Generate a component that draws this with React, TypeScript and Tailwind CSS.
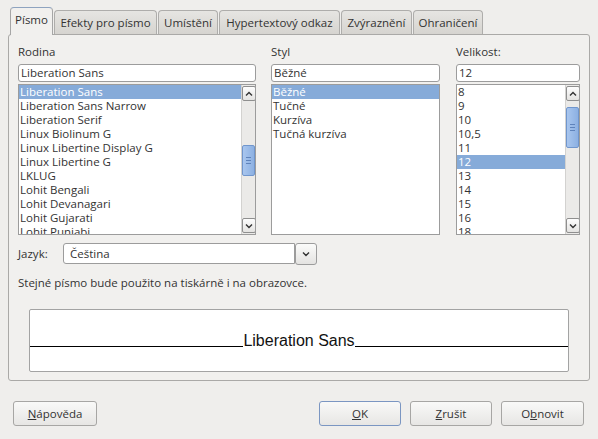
import React from 'react';

const families = [
  'Liberation Sans',
  'Liberation Sans Narrow',
  'Liberation Serif',
  'Linux Biolinum G',
  'Linux Libertine Display G',
  'Linux Libertine G',
  'LKLUG',
  'Lohit Bengali',
  'Lohit Devanagari',
  'Lohit Gujarati',
  'Lohit Punjabi',
];

const styles = ['Běžné', 'Tučné', 'Kurzíva', 'Tučná kurzíva'];

const sizes = ['8', '9', '10', '10,5', '11', '12', '13', '14', '15', '16', '18'];

const tabs = [
  { label: 'Písmo', w: 'w-[43px]' },
  { label: 'Efekty pro písmo', w: 'w-[103px]' },
  { label: 'Umístění', w: 'w-[60px]' },
  { label: 'Hypertextový odkaz', w: 'w-[121px]' },
  { label: 'Zvýraznění', w: 'w-[71px]' },
  { label: 'Ohraničení', w: 'w-[70px]' },
];

function Chevron({ up }: { up?: boolean }) {
  return (
    <svg width="8" height="6" viewBox="0 0 8 6">
      <path
        d={up ? 'M1 4.5 L4 1.5 L7 4.5' : 'M1 1.5 L4 4.5 L7 1.5'}
        fill="none"
        stroke="#333"
        strokeWidth="1.4"
      />
    </svg>
  );
}

function ArrowButton({ up }: { up?: boolean }) {
  return (
    <div className="h-[15px] w-[14px] flex items-center justify-center rounded-[2px] border border-[#8f8f8f] bg-gradient-to-b from-[#fdfdfd] to-[#e4e3e1]">
      <Chevron up={up} />
    </div>
  );
}

function Scrollbar({ thumb }: { thumb: string }) {
  return (
    <div className="w-[14px] flex flex-col bg-[#ebeae8] border-l border-[#d3d2d0] py-[1px]">
      <ArrowButton up />
      <div className="flex-1">
        <div className={`${thumb} rounded-[2px] border border-[#7096cd] bg-gradient-to-r from-[#a9c6ee] to-[#8cb0e2] flex flex-col items-center justify-center gap-[2px]`}>
          <div className="w-[5px] h-px bg-[#5f83bb]" />
          <div className="w-[5px] h-px bg-[#5f83bb]" />
          <div className="w-[5px] h-px bg-[#5f83bb]" />
        </div>
      </div>
      <ArrowButton />
    </div>
  );
}

function ListBox({ items, selected, thumb }: { items: string[]; selected: number; thumb?: string }) {
  return (
    <div className="h-[151px] mt-[2px] flex border border-[#9c9c9c] bg-white overflow-hidden">
      <div className="flex-1 flex flex-col">
        {items.map((it, i) => (
          <div
            key={it}
            className={`h-[14px] shrink-0 leading-[14px] pl-[1px] whitespace-nowrap ${
              i === selected ? 'bg-[#86abd9] text-white' : ''
            }`}
          >
            {it}
          </div>
        ))}
      </div>
      {thumb && <Scrollbar thumb={thumb} />}
    </div>
  );
}

function Field({ value }: { value: string }) {
  return (
    <div className="h-[18px] mt-[4px] flex items-center px-[2px] rounded-[3px] border border-[#9c9c9c] bg-white">
      {value}
    </div>
  );
}

function Button({ children, def, w }: { children: React.ReactNode; def?: boolean; w: string }) {
  return (
    <div
      className={`${w} h-[25px] flex items-center justify-center rounded-[3px] border bg-gradient-to-b from-[#f9f9f8] to-[#e7e6e4] ${
        def ? 'border-[#7b96c2]' : 'border-[#a7a6a4]'
      }`}
    >
      {children}
    </div>
  );
}

export default function App() {
  return (
    <div
      className="w-[598px] h-[439px] bg-[#efeeec] text-[#333] text-[11.5px] overflow-hidden"
      style={{ fontFamily: '"Open Sans", "DejaVu Sans", sans-serif' }}
    >
      {/* tabs */}
      <div className="flex items-end gap-px pl-[10px] pt-[7px] h-[35px] relative z-10">
        {tabs.map((t, i) =>
          i === 0 ? (
            <div
              key={t.label}
              className={`${t.w} h-[28px] flex items-center justify-center rounded-t-[4px] border border-b-0 border-[#a6a6a6] border-t-[#8ea3bf] bg-[#f1f0ee] pb-[3px]`}
            >
              {t.label}
            </div>
          ) : (
            <div
              key={t.label}
              className={`${t.w} h-[24px] mb-px flex items-center justify-center rounded-t-[4px] border border-b-0 border-[#aeadab] bg-gradient-to-b from-[#e6e5e2] to-[#d6d4d0]`}
            >
              {t.label}
            </div>
          )
        )}
      </div>

      {/* panel */}
      <div className="mx-[8px] -mt-px w-[582px] h-[347px] rounded-[3px] border border-[#aaa9a7] bg-[#f1f0ee] px-[9px] pt-[9px]">
        <div className="flex gap-[15px]">
          <div className="w-[238px]">
            <div className="h-[16px] leading-[16px]">Rodina</div>
            <Field value="Liberation Sans" />
            <ListBox items={families} selected={0} thumb="mt-[44px] h-[31px]" />
          </div>
          <div className="w-[169px]">
            <div className="h-[16px] leading-[16px]">Styl</div>
            <Field value="Běžné" />
            <ListBox items={styles} selected={0} />
          </div>
          <div className="w-[124px] ml-px">
            <div className="h-[16px] leading-[16px]">Velikost:</div>
            <Field value="12" />
            <ListBox items={sizes} selected={5} thumb="mt-[6px] h-[41px]" />
          </div>
        </div>

        <div className="flex items-center mt-[8px] h-[21px]">
          <div className="w-[45px]">
            <span className="underline">J</span>azyk:
          </div>
          <div className="w-[232px] h-[21px] flex items-center px-[6px] rounded-l-[3px] border border-[#9c9c9c] bg-white">
            Čeština
          </div>
          <div className="w-[22px] h-[22px] flex items-center justify-center rounded-[3px] border border-[#9c9c9c] bg-gradient-to-b from-[#fbfbfa] to-[#e4e3e1]">
            <Chevron />
          </div>
        </div>

        <div className="mt-[11px] h-[16px] leading-[16px]">
          Stejné písmo bude použito na tiskárně i na obrazovce.
        </div>

        <div className="mt-[18px] mx-[11px] h-[63px] rounded-[2px] border border-[#a3a3a3] bg-white pt-[23px]">
          <div className="flex items-end h-[16px]">
            <div className="flex-1 h-[1.5px] bg-black mb-[2px]" />
            <span
              className="text-[16px] leading-[16px] text-[#111]"
              style={{ fontFamily: '"Liberation Sans", Arial, sans-serif' }}
            >
              Liberation Sans
            </span>
            <div className="flex-1 h-[1.5px] bg-black mb-[2px]" />
          </div>
        </div>
      </div>

      {/* buttons */}
      <div className="flex items-center mt-[20px] pl-[13px] pr-[14px]">
        <Button w="w-[84px]">
          <span className="underline">N</span>ápověda
        </Button>
        <div className="flex-1" />
        <div className="flex gap-[9px]">
          <Button w="w-[82px]" def>
            <span className="underline">O</span>K
          </Button>
          <Button w="w-[82px]">
            <span className="underline">Z</span>rušit
          </Button>
          <Button w="w-[83px]">
            O<span className="underline">b</span>novit
          </Button>
        </div>
      </div>
    </div>
  );
}
